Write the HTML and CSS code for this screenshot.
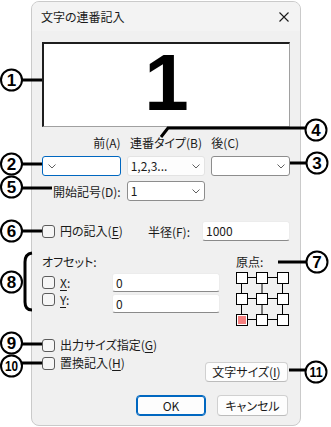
FILE: index.html
```html
<!DOCTYPE html>
<html lang="ja">
<head>
<meta charset="UTF-8" />
<title>文字の連番記入</title>
<link rel="stylesheet" href="styles.css">
</head>
<body>

<div class="dialog">
  <div class="titlebar">
    <span>文字の連番記入</span>
    <svg class="close" width="10" height="10" viewBox="0 0 10 10"><path d="M0.5 0.5 L9.5 9.5 M9.5 0.5 L0.5 9.5" stroke="#1a1a1a" stroke-width="1.1" fill="none"/></svg>
  </div>

  <div class="content">
    <div class="preview">1</div>

    <div class="cols labels">
      <span class="right">前(A)</span>
      <span class="center">連番タイプ(B)</span>
      <span>後(C)</span>
    </div>

    <div class="cols">
      <div class="combo focus">
        <svg class="chev" width="8" height="5" viewBox="0 0 8 5"><path d="M0.5 0.5 L4 4 L7.5 0.5" stroke="#606060" fill="none"/></svg>
      </div>
      <div class="combo soft">
        <span>1,2,3...</span>
        <svg class="chev" width="8" height="5" viewBox="0 0 8 5"><path d="M0.5 0.5 L4 4 L7.5 0.5" stroke="#606060" fill="none"/></svg>
      </div>
      <div class="combo">
        <span></span>
        <svg class="chev" width="8" height="5" viewBox="0 0 8 5"><path d="M0.5 0.5 L4 4 L7.5 0.5" stroke="#606060" fill="none"/></svg>
      </div>
    </div>

    <div class="cols row-d">
      <span class="right">開始記号(D):</span>
      <div class="combo">
        <span>1</span>
        <svg class="chev" width="8" height="5" viewBox="0 0 8 5"><path d="M0.5 0.5 L4 4 L7.5 0.5" stroke="#606060" fill="none"/></svg>
      </div>
    </div>

    <div class="row-e">
      <span class="check"></span>
      <span class="check-text">円の記入(<u>E</u>)</span>
      <span class="radius-label">半径(F):</span>
      <div class="field radius">1000</div>
    </div>

    <div class="offset">
      <div class="offset-left">
        <div class="caption">オフセット:</div>
        <div class="offset-rows">
          <div class="checks">
            <div class="check-line"><span class="check"></span><span class="check-text"><u>X</u>:</span></div>
            <div class="check-line"><span class="check"></span><span class="check-text"><u>Y</u>:</span></div>
          </div>
          <div class="inputs">
            <div class="field">0</div>
            <div class="field">0</div>
          </div>
        </div>
      </div>
      <div class="origin">
        <div class="caption">原点:</div>
        <svg class="origin-grid" width="54" height="54" viewBox="0 0 54 54">
          <g stroke="#000" stroke-width="1" fill="none">
            <path d="M12 5.5 H20 M32 5.5 H41 M12 26.5 H20 M32 26.5 H41 M12 47.5 H20 M32 47.5 H41"/>
            <path d="M5.5 12 V21 M5.5 33 V42 M26 12 V21 M26 33 V42 M46.5 12 V21 M46.5 33 V42"/>
          </g>
          <g stroke="#000" stroke-width="1" fill="#fff">
            <rect x="0.5" y="0.5" width="11" height="11"/>
            <rect x="20.5" y="0.5" width="11" height="11"/>
            <rect x="41.5" y="0.5" width="11" height="11"/>
            <rect x="0.5" y="21.5" width="11" height="11"/>
            <rect x="20.5" y="21.5" width="11" height="11"/>
            <rect x="41.5" y="21.5" width="11" height="11"/>
            <rect x="0.5" y="42.5" width="11" height="11"/>
            <rect x="20.5" y="42.5" width="11" height="11"/>
            <rect x="41.5" y="42.5" width="11" height="11"/>
          </g>
          <rect x="2" y="44" width="8" height="8" fill="#f57f7f"/>
        </svg>
      </div>
    </div>

    <div class="bottom">
      <div class="bottom-checks">
        <div class="check-line tall"><span class="check"></span><span class="check-text">出力サイズ指定(<u>G</u>)</span></div>
        <div class="check-line tall"><span class="check"></span><span class="check-text">置換記入(<u>H</u>)</span></div>
      </div>
      <button class="btn size-btn">文字サイズ(<u>I</u>)</button>
    </div>

    <div class="footer">
      <button class="btn default">OK</button>
      <button class="btn">キャンセル</button>
    </div>
  </div>
</div>

<svg class="notes" width="331" height="427" viewBox="0 0 331 427">
  <g stroke="#000" stroke-width="3" fill="none">
    <path d="M22 80 H42"/>
    <path d="M22 164 H42"/>
    <path d="M290 163 H307"/>
    <path d="M305 128 H168 L161 137"/>
    <path d="M22 188 H52"/>
    <path d="M22 231 H42"/>
    <path d="M278 262 H307"/>
    <path d="M32 253 Q25 254 25 262 V302 Q25 310 32 310"/>
    <path d="M22 344 H42"/>
    <path d="M22 363 H42"/>
    <path d="M289 370 H306"/>
  </g>
  <g stroke="#000" stroke-width="2" fill="#fff">
    <circle cx="11.5" cy="80" r="10.5"/>
    <circle cx="11.5" cy="164" r="10.5"/>
    <circle cx="317" cy="163" r="10.5"/>
    <circle cx="316" cy="130" r="10.5"/>
    <circle cx="11.5" cy="187" r="10.5"/>
    <circle cx="11.5" cy="231" r="10.5"/>
    <circle cx="317" cy="262" r="10.5"/>
    <circle cx="11.5" cy="282" r="10.5"/>
    <circle cx="11.5" cy="343" r="10.5"/>
    <circle cx="11.5" cy="366" r="10.5"/>
    <circle cx="316" cy="372" r="10.5"/>
  </g>
  <g class="num">
    <text x="11.5" y="86">1</text>
    <text x="11.5" y="170">2</text>
    <text x="317" y="169">3</text>
    <text x="316" y="136">4</text>
    <text x="11.5" y="193">5</text>
    <text x="11.5" y="237">6</text>
    <text x="317" y="268">7</text>
    <text x="11.5" y="288">8</text>
    <text x="11.5" y="349">9</text>
    <text class="two" x="11.5" y="371" textLength="13" lengthAdjust="spacingAndGlyphs">10</text>
    <text class="two" x="316" y="377" textLength="13" lengthAdjust="spacingAndGlyphs">11</text>
  </g>
</svg>

</body>
</html>
```

FILE: styles.css
```css
html, body {
  margin: 0;
  padding: 0;
}
body {
  position: relative;
  height: 427px;
  overflow: hidden;
  background: #fff;
  color: #1a1a1a;
  font-family: "Noto Sans CJK JP", "Noto Sans", sans-serif;
  font-size: 12px;
  font-feature-settings: "palt";
}
u {
  text-decoration-thickness: 1px;
  text-underline-offset: 2px;
}
.dialog {
  margin: 1px 0 0 31px;
  width: 268px;
  border: 1px solid #cacaca;
  border-radius: 8px;
  background: #f0f0f0;
  overflow: hidden;
}
.titlebar {
  height: 29px;
  background: #f3f3f3;
  display: flex;
  align-items: center;
  justify-content: space-between;
  padding: 0 11px 0 9px;
  line-height: 16px;
}
.content {
  padding: 11px 10px 9px;
}
.preview {
  box-sizing: border-box;
  height: 85px;
  padding-bottom: 4px;
  background: #fff;
  border-top: 2px solid #1e1e1e;
  border-left: 2px solid #1e1e1e;
  border-right: 1px solid #a0a0a0;
  border-bottom: 1px solid #a0a0a0;
  display: flex;
  align-items: center;
  justify-content: center;
  font: bold 80px/1 "Liberation Sans", Arial, sans-serif;
  color: #000;
}
.cols {
  display: grid;
  grid-template-columns: repeat(3, 1fr);
  column-gap: 6px;
  margin-top: 5px;
  align-items: center;
}
.labels {
  margin-top: 8px;
  height: 16px;
  line-height: 16px;
}
.right { text-align: right; }
.center { text-align: center; }
.combo {
  box-sizing: border-box;
  height: 20px;
  border: 1px solid #8d8d8d;
  border-radius: 3px;
  background: #fff;
  display: flex;
  align-items: center;
  justify-content: space-between;
  padding: 0 4px 0 3px;
  line-height: 16px;
}
.combo.focus {
  border-color: #0067c0;
  padding-left: 5px;
}
.combo.soft {
  border-color: #e3e3e3;
  background: #fdfdfd;
}
.chev { display: block; }
.row-e {
  display: flex;
  align-items: center;
  margin-top: 20px;
  height: 20px;
}
.check {
  box-sizing: border-box;
  width: 13px;
  height: 13px;
  border: 1px solid #5c5c5c;
  border-radius: 3px;
  background: #f6f6f6;
  flex: none;
}
.check-text {
  margin-left: 5px;
  line-height: 16px;
}
.radius-label {
  margin-left: auto;
  margin-right: 12px;
}
.field {
  box-sizing: border-box;
  height: 19px;
  background: #fff;
  border: 1px solid #ececec;
  border-bottom-color: #8a8a8a;
  border-radius: 3px;
  padding-left: 3px;
  line-height: 17px;
}
.field.radius {
  width: 88px;
  height: 20px;
  line-height: 18px;
}
.offset {
  display: flex;
  margin-top: 13px;
}
.offset-left {
  width: 178px;
}
.caption {
  height: 16px;
  line-height: 16px;
}
.offset-rows {
  display: flex;
  margin-top: 3px;
}
.checks {
  display: flex;
  flex-direction: column;
  gap: 4px;
  padding-top: 3px;
}
.check-line {
  display: flex;
  align-items: center;
  height: 13px;
}
.check-line.tall {
  height: 18px;
}
.inputs {
  margin-left: auto;
  width: 108px;
  display: flex;
  flex-direction: column;
  gap: 2px;
}
.origin {
  margin-left: 16px;
}
.origin-grid {
  display: block;
  margin-top: 2px;
}
.bottom {
  display: flex;
  margin-top: 10px;
}
.btn {
  box-sizing: border-box;
  height: 20px;
  padding: 0;
  background: #fdfdfd;
  border: 1px solid #d0d0d0;
  border-bottom-color: #bcbcbc;
  border-radius: 4px;
  font-family: "Noto Sans CJK JP", "Noto Sans", sans-serif;
  font-size: 12px;
  font-feature-settings: "palt";
  color: #1a1a1a;
  line-height: 16px;
}
.size-btn {
  width: 83px;
  margin: 26px 2px 0 auto;
}
.footer {
  display: flex;
  justify-content: flex-end;
  gap: 11px;
  margin-top: 13px;
  padding-right: 2px;
}
.footer .btn {
  width: 71px;
  height: 21px;
}
.footer .btn.default {
  width: 70px;
  border: 1px solid #0067c0;
  box-shadow: inset 0 0 0 1px #0067c0;
}
.notes {
  position: absolute;
  left: 0;
  top: 0;
}
.num text {
  font: bold 17px "Liberation Sans", Arial, sans-serif;
  text-anchor: middle;
  fill: #000;
}
.num text.two {
  font-size: 15px;
}
```
